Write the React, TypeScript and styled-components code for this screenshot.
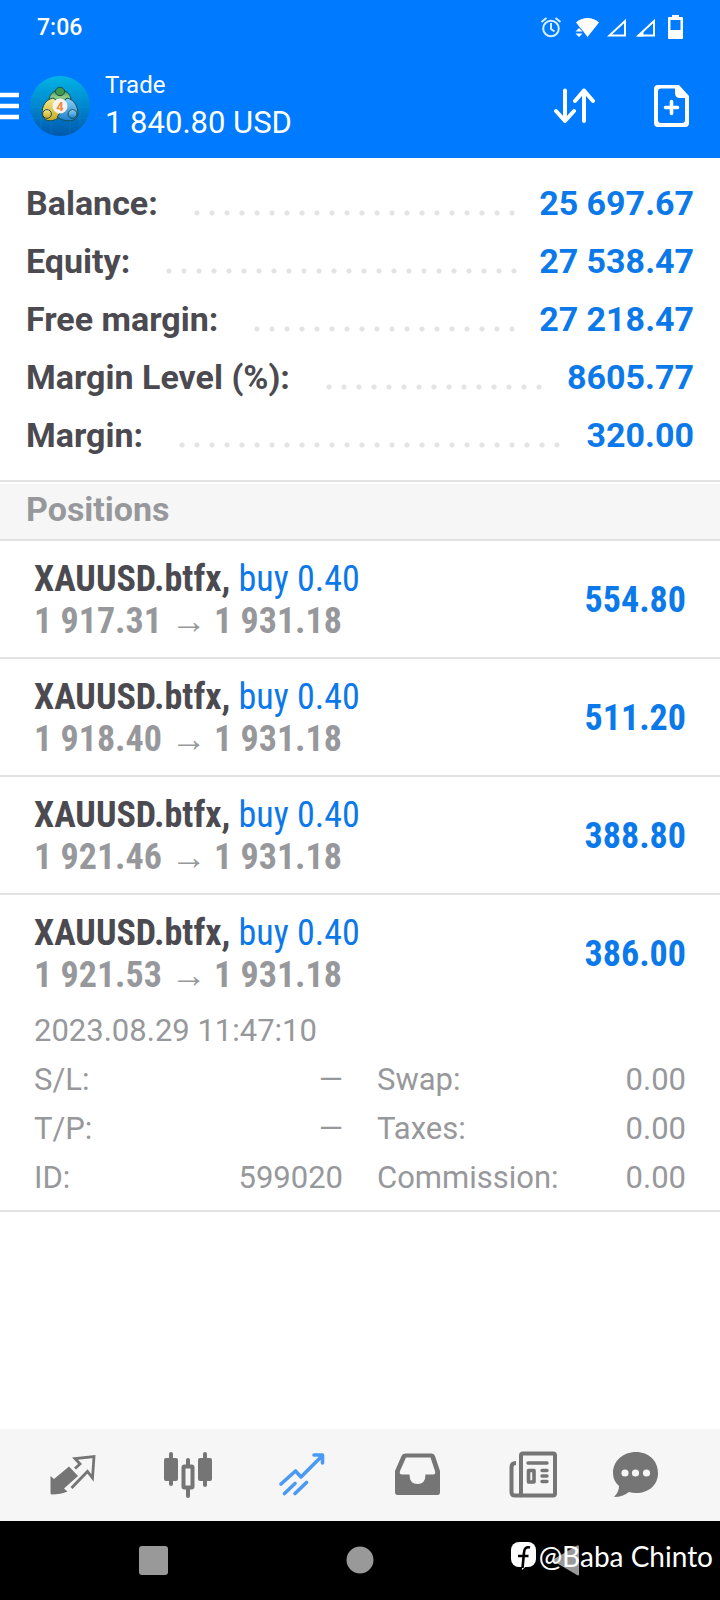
import React from "react";
import styled, { createGlobalStyle } from "styled-components";

const color = {
  brand: "#007aff",
  link: "#0b79ea",
  ink: "#4b4a50",
  muted: "#97989b",
  line: "#e2e2e3",
  panel: "#f6f6f6",
  icon: "#757575",
  active: "#4a9af5",
};

const GlobalStyle = createGlobalStyle`
  * { box-sizing: border-box; }
  body {
    margin: 0;
    background: #fff;
    font-family: Roboto, "Liberation Sans", sans-serif;
  }
  h1, h2, p, ul, dl, dd { margin: 0; padding: 0; }
  button { border: 0; padding: 0; background: none; color: inherit; font: inherit; cursor: pointer; }
  svg { display: block; }
`;

const Screen = styled.div`
  display: flex;
  flex-direction: column;
  min-height: 100vh;
`;

const Header = styled.header`
  background: ${color.brand};
  color: #fff;
`;

const StatusBar = styled.div`
  display: flex;
  align-items: center;
  justify-content: space-between;
  height: 54px;
  padding: 0 36px 0 37px;
  font-size: 23px;
  font-weight: 500;
`;

const AppBar = styled.div`
  display: flex;
  align-items: center;
  height: 104px;
  padding-right: 30px;
`;

const MenuButton = styled.button`
  width: 30px;
`;

const Heading = styled.div`
  flex: 1;
  padding: 6px 0 0 15px;
`;

const ScreenName = styled.p`
  font-size: 24px;
  line-height: 28px;
`;

const Total = styled.h1`
  font-size: 31px;
  font-weight: 400;
  line-height: 48px;
`;

const Actions = styled.div`
  display: flex;
  align-items: center;
  gap: 58px;
`;

const Summary = styled.dl`
  padding: 16px 26px;
  border-bottom: 2px solid ${color.line};
  font-size: 34px;
  font-weight: 700;
  line-height: 58px;
`;

const SummaryRow = styled.div`
  display: flex;
`;

const SummaryLabel = styled.dt`
  color: ${color.ink};
`;

const Leader = styled.span`
  flex: 1;
  height: 6px;
  margin: 36px 18px 0 36px;
  background: radial-gradient(circle at 3px 3px, #e3e3e4 2px, transparent 3px) 0 0 / 15px 6px repeat-x;
`;

const SummaryValue = styled.dd`
  color: ${color.link};
`;

const SectionTitle = styled.h2`
  margin-top: 2px;
  padding: 0 26px 4px;
  border-bottom: 2px solid ${color.line};
  background: ${color.panel};
  color: ${color.muted};
  font-size: 34px;
  line-height: 51px;
`;

const Main = styled.main`
  flex: 1;
`;

const PositionList = styled.ul`
  list-style: none;
`;

const Position = styled.li`
  border-bottom: 2px solid ${color.line};
`;

const PositionHead = styled.div`
  display: flex;
  align-items: center;
  justify-content: space-between;
  padding: 17px 34px 15px;
  font-family: "Roboto Condensed", Roboto, sans-serif;
  font-size: 36px;
  font-weight: 700;
  line-height: 42px;
`;

const Instrument = styled.p`
  color: ${color.ink};
`;

const Side = styled.span`
  color: ${color.link};
  font-weight: 400;
`;

const Prices = styled.p`
  display: flex;
  align-items: baseline;
  color: ${color.muted};
`;

const OpenPrice = styled.span`
  min-width: 137px;
`;

const PriceArrow = styled.span`
  width: 43px;
  font-family: "Liberation Sans", sans-serif;
  line-height: 32px;
`;

const Profit = styled.span`
  color: ${color.link};
`;

const Details = styled.div`
  margin-top: -5px;
  padding: 0 34px 8px;
  color: ${color.muted};
  font-size: 31px;
  line-height: 49px;
`;

const DetailGrid = styled.dl`
  display: grid;
  grid-template-columns: 1fr 1fr;
  column-gap: 34px;
`;

const Detail = styled.div`
  display: flex;
  justify-content: space-between;
`;

const TabBar = styled.nav`
  display: flex;
  height: 92px;
  padding: 0 15px;
  background: ${color.panel};
`;

const Tab = styled.button<{ $active?: boolean }>`
  display: flex;
  flex: 1;
  align-items: center;
  justify-content: center;
  color: ${(p) => (p.$active ? color.active : color.icon)};
`;

const SystemBar = styled.div`
  position: relative;
  display: flex;
  align-items: center;
  justify-content: space-between;
  height: 79px;
  padding: 0 137px 2px;
  background: #000;
  color: #999;
`;

const Watermark = styled.div`
  position: absolute;
  right: 7px;
  top: 18px;
  display: flex;
  align-items: center;
  gap: 3px;
  color: #fff;
  font-family: Lato, "Open Sans", sans-serif;
  font-size: 28px;
  line-height: 34px;
`;

const Logo = () => (
  <svg width="60" height="60" viewBox="0 0 60 60" aria-hidden="true">
    <defs>
      <linearGradient id="disc" x1="0" y1="0" x2="0" y2="1">
        <stop offset="0" stopColor="#00b4e4" />
        <stop offset=".5" stopColor="#0086cf" />
        <stop offset="1" stopColor="#0058ac" />
      </linearGradient>
      <linearGradient id="green" x1="0" y1="0" x2="0" y2="1">
        <stop offset="0" stopColor="#2f8f3f" />
        <stop offset=".4" stopColor="#8fcb8b" />
        <stop offset="1" stopColor="#2b9140" />
      </linearGradient>
      <linearGradient id="gold" x1="0" y1="0" x2="0" y2="1">
        <stop offset="0" stopColor="#f1e98d" />
        <stop offset="1" stopColor="#c9a820" />
      </linearGradient>
      <linearGradient id="azure" x1="0" y1="0" x2="0" y2="1">
        <stop offset="0" stopColor="#8fd3f5" />
        <stop offset="1" stopColor="#1b7fcb" />
      </linearGradient>
    </defs>
    <circle cx="30" cy="30" r="30" fill="url(#disc)" />
    <path d="M2 20H58M0 31H60M2 42H58M11 7V53M21 2V58M40 2V58M50 7V53" stroke="#2ab0e0" strokeWidth="1" opacity=".15" />
    <g stroke="#194e55" strokeWidth="1">
      <path d="M19 28C18 19 23 14 30 14S42 19 41 28L36 31H24Z" fill="url(#green)" />
      <path d="M23 22C15 24 12 30 12 38C13 45 21 47 28 42L30 36L26 24Z" fill="url(#gold)" />
      <path d="M37 22C45 24 48 31 48 38C47 46 36 47 27 41L31 36L35 24Z" fill="url(#azure)" />
      <ellipse cx="30" cy="15.500" rx="4.600" ry="4.200" fill="#3f9a4e" />
      <circle cx="17" cy="38" r="4.400" fill="url(#gold)" />
      <circle cx="42.500" cy="38" r="4.400" fill="url(#azure)" />
    </g>
    <circle cx="30" cy="30" r="7.500" fill="#f6f3ee" />
    <text x="30" y="34.500" textAnchor="middle" fontFamily="Roboto, sans-serif" fontSize="13" fontWeight="700" fill="#f08a3c">4</text>
  </svg>
);

const MenuIcon = () => (
  <svg width="19" height="28" viewBox="0 0 19 28" aria-hidden="true">
    <path d="M0 3H19M0 14H19M0 25H19" stroke="currentColor" strokeWidth="4.600" />
  </svg>
);

const StatusIcons = () => (
  <svg width="144" height="26" viewBox="540 13 144 26" role="img" aria-label="Alarm, Wi-Fi, signal, battery">
    <g fill="none" stroke="#d6eeff" strokeWidth="2">
      <circle cx="551" cy="27.500" r="7.800" />
      <path d="M551 22V28L554.500 30.500M541.500 21L546.500 17M560.500 21L555.500 17" />
    </g>
    <path d="M576 21.500C582 15.500 593 15.500 599 21.500L587.500 36L583 30L580 26.500Z" fill="#fff" />
    <path d="M575.500 30.500L579 27L582.500 30.500ZM575.500 32.500L579 36L582.500 32.500Z" fill="#fff" />
    <g fill="none" stroke="#fff" strokeWidth="2">
      <path d="M609.500 34.500H625V20Z" />
      <path d="M638.500 34.500H654V20Z" />
    </g>
    <path d="M637 35.500L643.500 29V35.500Z" fill="#fff" />
    <path fillRule="evenodd" d="M672 16V14H679V16H682Q683 16 683 17V37Q683 38 682 38H669Q668 38 668 37V17Q668 16 669 16ZM670.500 19V29H680.500V19Z" fill="#fff" />
  </svg>
);

const SortIcon = () => (
  <svg width="42" height="36" viewBox="0 0 42 36" fill="none" stroke="currentColor" strokeWidth="4" strokeLinecap="round" strokeLinejoin="round" aria-hidden="true">
    <path d="M11 2.500V33M2 23L11 33L20 23" />
    <path d="M30 33V2.500M21 13L30 2.500L39 13" />
  </svg>
);

const NewOrderIcon = () => (
  <svg width="36" height="44" viewBox="0 0 36 44" aria-hidden="true">
    <path fillRule="evenodd" fill="currentColor" d="M4 1H25L35 12V39Q35 43 31 43H4Q0 43 0 39V5Q0 1 4 1ZM7 4.500Q4 4.500 4 7.500V36Q4 39 7 39H28Q31 39 31 36V14H26Q21 14 21 9V4.500Z" />
    <path d="M17.500 17.500V29.500M11.500 23.500H23.500" stroke="currentColor" strokeWidth="3.600" strokeLinecap="round" />
  </svg>
);

const QuotesIcon = () => (
  <svg width="48" height="48" viewBox="0 0 48 48" aria-hidden="true">
    <path fill="currentColor" d="M1.500 25L5 28L20 15.500L29 25L15 37.500L18.500 40.500Q12 43.500 2.500 43.500Q1.500 43.500 1.500 41.500Z" />
    <path fill="none" stroke="currentColor" strokeWidth="2.800" d="M26 17.500L31 13L26 7.500L45 5.500L43.500 27L38.500 20.500L22.500 37" />
  </svg>
);

const ChartIcon = () => (
  <svg width="48" height="48" viewBox="0 0 48 48" aria-hidden="true">
    <g stroke="currentColor" strokeWidth="4" strokeLinecap="round">
      <path d="M7 3V33M41 3V34M24 9V15M24 38V45" />
    </g>
    <rect x="0" y="7" width="14" height="23" rx="2" fill="currentColor" />
    <rect x="34" y="7" width="14" height="23" rx="2" fill="currentColor" />
    <rect x="19.500" y="15.500" width="9" height="21" rx="1" fill="none" stroke="currentColor" strokeWidth="4" />
  </svg>
);

const TradeIcon = () => (
  <svg width="48" height="48" viewBox="1 1 48 48" fill="none" stroke="currentColor" strokeWidth="3.600" strokeLinecap="round" strokeLinejoin="round" aria-hidden="true">
    <path d="M3 34L17.500 21L23 27L44 6M36 5H44.500V13" />
    <path d="M6.500 43.500L17 33.500M17 43.500L28.500 32.500" />
  </svg>
);

const InboxIcon = () => (
  <svg width="48" height="48" viewBox="0 0 48 48" aria-hidden="true">
    <path fillRule="evenodd" fill="currentColor" d="M11 2.500H38Q40 2.500 41 5L46 20V41Q46 44 43.500 44H3.500Q1 44 1 41V20L7.500 5Q8.500 2.500 11 2.500ZM12 6.500L6 20Q5 23.500 8 23.500H15.500Q15.500 33 23.500 33T31.500 23.500H39Q42 23.500 41 20L36.500 6.500Z" />
  </svg>
);

const NewsIcon = () => (
  <svg width="48" height="48" viewBox="0 0 48 48" fill="none" stroke="currentColor" strokeWidth="4" strokeLinejoin="round" aria-hidden="true">
    <rect x="12" y="2.500" width="34" height="42" rx="2" />
    <path d="M7 12Q2.500 12 2.500 16V41Q2.500 44.500 6 44.500H13" strokeLinejoin="miter" />
    <path d="M19 12H38M33 19.500H38M33 25H38M33 30.500H38" strokeWidth="3.400" strokeLinecap="round" />
    <rect x="19.500" y="19.500" width="5.500" height="11.500" strokeWidth="3.600" />
  </svg>
);

const ChatIcon = () => (
  <svg width="72" height="48" viewBox="0 0 72 48" aria-hidden="true">
    <path fill="currentColor" d="M24 1C37 1 46 10 46 22S37 42 24 42Q20 42 17 41Q11 46 2 46Q7 41 7 35Q1 30 1 22C1 10 11 1 24 1Z" />
    <g fill="#f6f6f6">
      <circle cx="13" cy="22" r="3.600" />
      <circle cx="23.500" cy="22" r="3.600" />
      <circle cx="34.500" cy="22" r="3.600" />
    </g>
  </svg>
);

const FacebookIcon = () => (
  <svg width="25" height="30" viewBox="0 0 25 30" aria-hidden="true">
    <rect x="0" y="1" width="25" height="25" rx="8" fill="#fff" />
    <path d="M11 24V29L15.500 25Z" fill="#fff" />
    <path d="M19 6.500Q13.500 5 13 11.500L11.500 27M7 15H17.500" fill="none" stroke="#000" strokeWidth="2.600" />
  </svg>
);

const summary = [
  ["Balance:", "25 697.67"],
  ["Equity:", "27 538.47"],
  ["Free margin:", "27 218.47"],
  ["Margin Level (%):", "8605.77"],
  ["Margin:", "320.00"],
];

const positions = [
  { open: "1 917.31", profit: "554.80" },
  { open: "1 918.40", profit: "511.20" },
  { open: "1 921.46", profit: "388.80" },
  { open: "1 921.53", profit: "386.00", expanded: true },
];

const details = [
  ["S/L:", "—"],
  ["Swap:", "0.00"],
  ["T/P:", "—"],
  ["Taxes:", "0.00"],
  ["ID:", "599020"],
  ["Commission:", "0.00"],
];

const tabs = [
  { label: "Quotes", Icon: QuotesIcon },
  { label: "Chart", Icon: ChartIcon },
  { label: "Trade", Icon: TradeIcon, active: true },
  { label: "History", Icon: InboxIcon },
  { label: "News", Icon: NewsIcon },
  { label: "Messages", Icon: ChatIcon },
];

export default function App() {
  return (
    <Screen>
      <GlobalStyle />
      <Header>
        <StatusBar>
          <span>7:06</span>
          <StatusIcons />
        </StatusBar>
        <AppBar>
          <MenuButton aria-label="Menu"><MenuIcon /></MenuButton>
          <Logo />
          <Heading>
            <ScreenName>Trade</ScreenName>
            <Total>1 840.80 USD</Total>
          </Heading>
          <Actions>
            <button aria-label="Sort"><SortIcon /></button>
            <button aria-label="New order"><NewOrderIcon /></button>
          </Actions>
        </AppBar>
      </Header>

      <Main>
        <Summary>
          {summary.map(([label, value]) => (
            <SummaryRow key={label}>
              <SummaryLabel>{label}</SummaryLabel>
              <Leader />
              <SummaryValue>{value}</SummaryValue>
            </SummaryRow>
          ))}
        </Summary>

        <SectionTitle>Positions</SectionTitle>
        <PositionList>
          {positions.map((p) => (
            <Position key={p.open}>
              <PositionHead>
                <div>
                  <Instrument>XAUUSD.btfx, <Side>buy 0.40</Side></Instrument>
                  <Prices>
                    <OpenPrice>{p.open}</OpenPrice>
                    <PriceArrow>→</PriceArrow>
                    <span>1 931.18</span>
                  </Prices>
                </div>
                <Profit>{p.profit}</Profit>
              </PositionHead>
              {p.expanded && (
                <Details>
                  <p>2023.08.29 11:47:10</p>
                  <DetailGrid>
                    {details.map(([label, value]) => (
                      <Detail key={label}>
                        <dt>{label}</dt>
                        <dd>{value}</dd>
                      </Detail>
                    ))}
                  </DetailGrid>
                </Details>
              )}
            </Position>
          ))}
        </PositionList>
      </Main>

      <TabBar>
        {tabs.map(({ label, Icon, active }) => (
          <Tab key={label} aria-label={label} $active={active}><Icon /></Tab>
        ))}
      </TabBar>

      <SystemBar>
        <button aria-label="Recent apps">
          <svg width="32" height="32" viewBox="0 0 32 32"><rect x="2" y="2" width="29" height="29" rx="3" fill="currentColor" /></svg>
        </button>
        <button aria-label="Home">
          <svg width="28" height="28" viewBox="0 0 28 28"><circle cx="14" cy="14" r="13.500" fill="currentColor" /></svg>
        </button>
        <button aria-label="Back">
          <svg width="32" height="32" viewBox="0 0 32 32"><path d="M26 1.500Q28 .5 28 3V30Q28 32.500 26 31L3 17.500Q1 16 3 15Z" fill="currentColor" /></svg>
        </button>
        <Watermark>
          <FacebookIcon />
          <span>@Baba Chinto</span>
        </Watermark>
      </SystemBar>
    </Screen>
  );
}
